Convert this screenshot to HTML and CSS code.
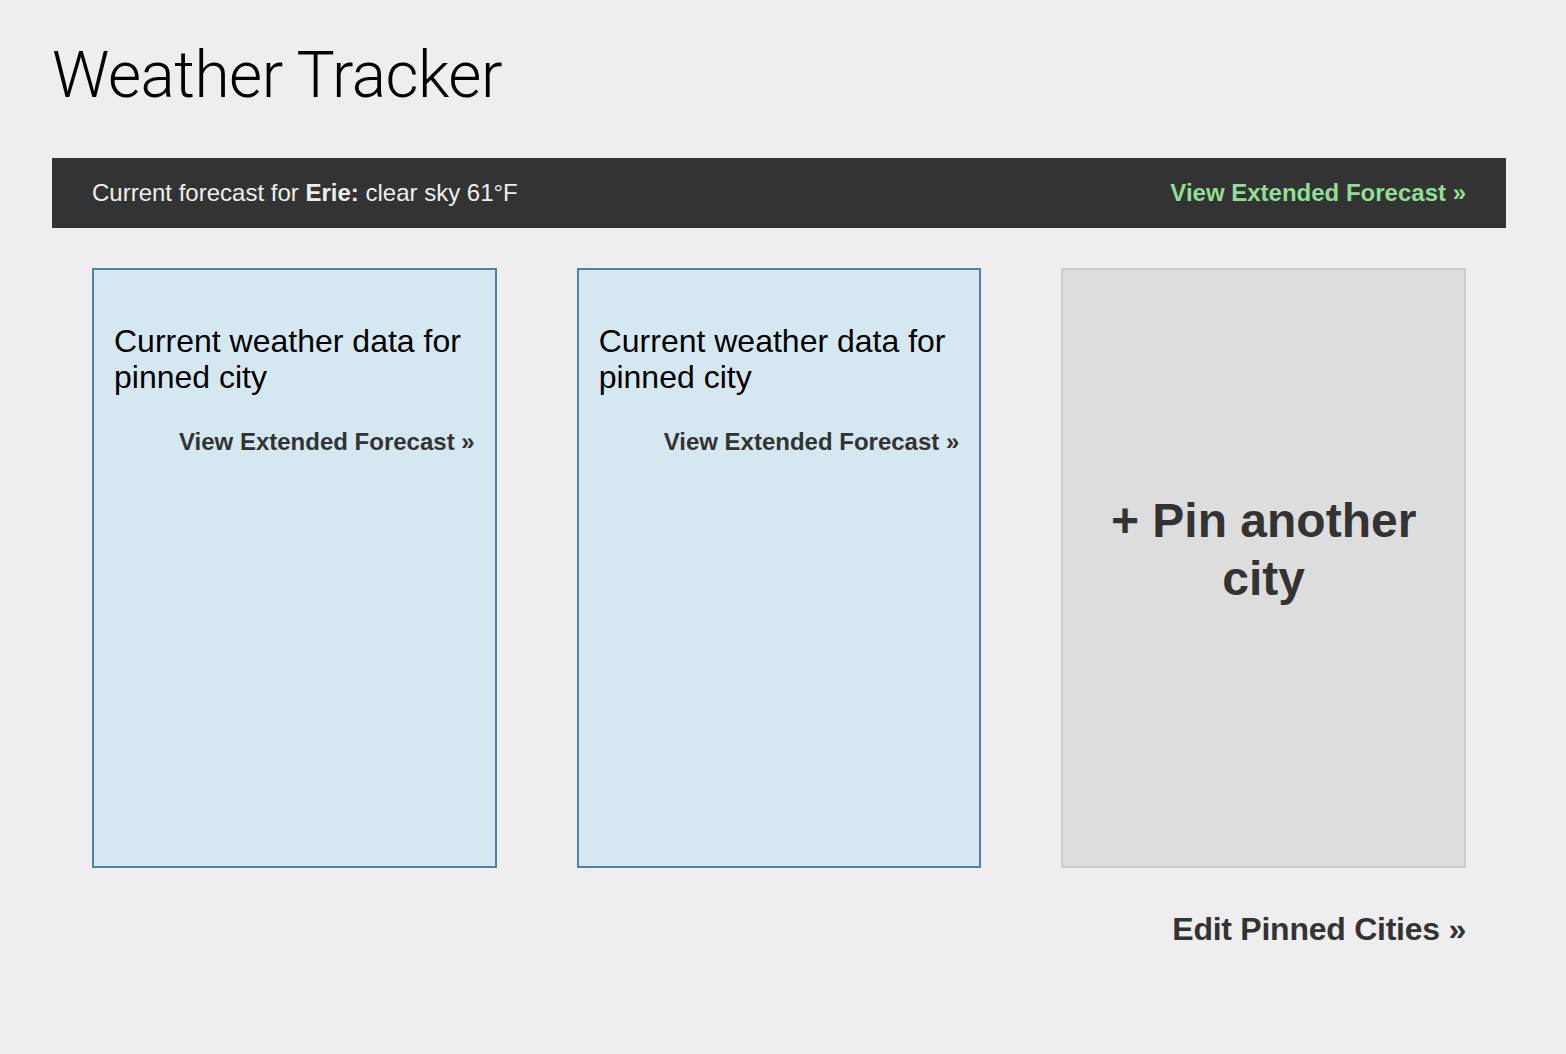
FILE: index.html
```html
<!DOCTYPE html>
<html>
<head>
<meta charset="utf-8">
<title>Weather Tracker</title>
<link rel="stylesheet" href="styles.css">
</head>
<body>
<div class="page">
  <h1 class="title">Weather Tracker</h1>
  <div class="bar">
    <span class="bar-text">Current forecast for <b>Erie:</b> clear sky 61°F</span>
    <a class="bar-link" href="#">View Extended Forecast »</a>
  </div>
  <div class="cards">
    <div class="card card-city">
      <h3 class="card-title">Current weather data for pinned city</h3>
      <a class="card-link" href="#">View Extended Forecast »</a>
    </div>
    <div class="card card-city">
      <h3 class="card-title">Current weather data for pinned city</h3>
      <a class="card-link" href="#">View Extended Forecast »</a>
    </div>
    <div class="card card-add">
      <h2 class="add-text">+ Pin another city</h2>
    </div>
  </div>
  <div class="footer">
    <a class="edit-link" href="#">Edit Pinned Cities »</a>
  </div>
</div>
</body>
</html>
```
FILE: styles.css
```css
html, body {
  margin: 0;
  padding: 0;
  background: #eeeeee;
}
body {
  font-family: "Liberation Sans", Arial, sans-serif;
  color: #000;
}
.page {
  padding: 38px 60px 0 52px;
}
.title {
  margin: 0;
  font-family: Roboto, "Liberation Sans", sans-serif;
  font-weight: 300;
  font-size: 64px;
  line-height: 76px;
  letter-spacing: -0.5px;
  color: #000;
}
.bar {
  margin-top: 44px;
  height: 70px;
  background: #333333;
  display: flex;
  align-items: center;
  justify-content: space-between;
  padding: 0 40px;
  font-size: 24px;
}
.bar-text {
  color: #eeeeee;
}
.bar-link {
  color: #8fdf94;
  font-weight: bold;
  text-decoration: none;
}
.cards {
  margin-top: 40px;
  padding: 0 40px;
  display: grid;
  grid-template-columns: repeat(3, 1fr);
  column-gap: 80px;
}
.card {
  box-sizing: border-box;
  height: 600px;
  border: 2px solid;
  padding: 0 20px;
}
.card-city {
  background: #d5e8f1;
  border-color: #4a82aa;
  display: flex;
  flex-direction: column;
}
.card-title {
  margin: 53px 0 0;
  font-size: 32px;
  font-weight: normal;
  line-height: 36px;
}
.card-link {
  margin-top: 33px;
  align-self: flex-end;
  font-size: 24px;
  font-weight: bold;
  color: #333333;
  text-decoration: none;
}
.card-add {
  background: #dddddd;
  border-color: #cccccc;
  text-align: center;
}
.add-text {
  margin: 222px 0 0;
  font-size: 48px;
  line-height: 58px;
  font-weight: bold;
  color: #333333;
}
.footer {
  padding: 0 40px;
  margin-top: 43px;
  text-align: right;
}
.edit-link {
  font-size: 32px;
  font-weight: bold;
  letter-spacing: -0.25px;
  color: #333333;
  text-decoration: none;
}
```
